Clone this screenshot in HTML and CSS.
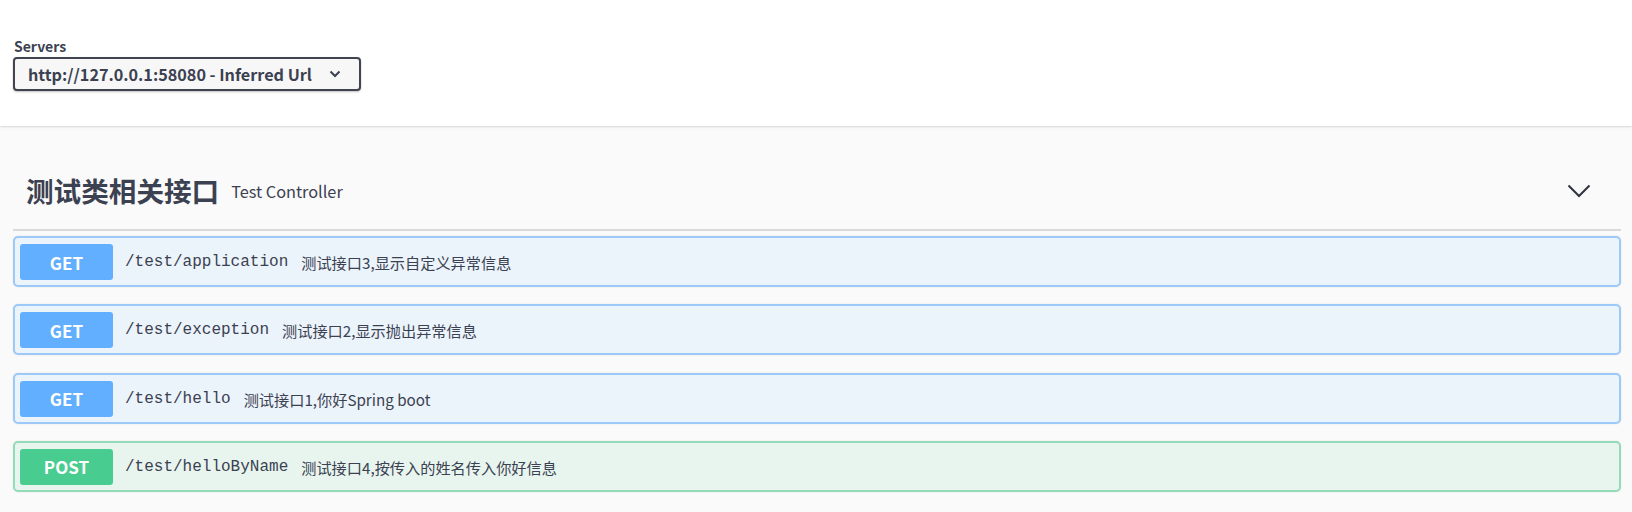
FILE: index.html
```html
<!DOCTYPE html>
<html lang="zh-CN">
<head>
<meta charset="utf-8">
<title>Swagger UI</title>
<link rel="stylesheet" href="styles.css">
</head>
<body>
<div class="scheme">
  <div class="servers">
    <label class="servers-label">Servers</label>
    <div class="select">
      <span class="select-text">http://127.0.0.1:58080 - Inferred Url</span>
      <svg class="select-arrow" width="12" height="8" viewBox="0 0 12 8"><path d="M1.5 1.5 L6 6 L10.5 1.5" fill="none" stroke="#3b4151" stroke-width="2"/></svg>
    </div>
  </div>
</div>
<div class="main">
  <div class="wrapper">
    <div class="tag">
      <h3 class="tag-title">测试类相关接口</h3>
      <span class="tag-desc">Test Controller</span>
      <svg class="tag-arrow" width="24" height="14" viewBox="0 0 24 14"><path d="M1.5 1.5 L12 12 L22.5 1.5" fill="none" stroke="#2f3340" stroke-width="2"/></svg>
    </div>
    <div class="opblock get">
      <span class="method">GET</span>
      <span class="path">/test/application</span>
      <span class="desc">测试接口3,显示自定义异常信息</span>
    </div>
    <div class="opblock get">
      <span class="method">GET</span>
      <span class="path">/test/exception</span>
      <span class="desc">测试接口2,显示抛出异常信息</span>
    </div>
    <div class="opblock get">
      <span class="method">GET</span>
      <span class="path">/test/hello</span>
      <span class="desc">测试接口1,你好Spring boot</span>
    </div>
    <div class="opblock post">
      <span class="method">POST</span>
      <span class="path">/test/helloByName</span>
      <span class="desc">测试接口4,按传入的姓名传入你好信息</span>
    </div>
  </div>
</div>
</body>
</html>
```

FILE: styles.css
```css
html, body {
  margin: 0;
  padding: 0;
  background: #fafafa;
  font-family: "Noto Sans CJK SC", sans-serif;
  color: #3b4151;
}

.scheme {
  height: 126px;
  background: #ffffff;
  box-shadow: 0 1px 2px 0 rgba(0, 0, 0, 0.15);
  box-sizing: border-box;
  padding: 37px 0 0 13px;
  position: relative;
}

.servers {
  display: flex;
  flex-direction: column;
  align-items: flex-start;
}

.servers-label {
  font-size: 14px;
  font-weight: 700;
  line-height: 19px;
  margin-left: 1px;
  margin-bottom: 1px;
}

.select {
  box-sizing: border-box;
  width: 348px;
  height: 34px;
  border: 2px solid #41444e;
  border-radius: 4px;
  background: #f7f7f7;
  box-shadow: 0 1px 2px 0 rgba(0, 0, 0, 0.25);
  display: flex;
  align-items: center;
  padding: 0 0 0 13px;
}

.select-text {
  font-size: 16.2px;
  font-weight: 700;
  line-height: 1;
  white-space: nowrap;
}

.select-arrow {
  margin-left: 17px;
}

.main {
  padding: 27px 11px 0 13px;
}

.tag {
  height: 76px;
  border-bottom: 2px solid #dadada;
  display: flex;
  align-items: center;
  padding: 0 0 0 13px;
  margin-bottom: 5px;
}

.tag-title {
  margin: 0;
  font-size: 27.6px;
  font-weight: 700;
  line-height: 1;
  color: #3b4151;
}

.tag-desc {
  margin-left: 12px;
  font-size: 16.3px;
  line-height: 1;
  color: #3b4151;
}

.tag-arrow {
  margin-left: auto;
  margin-right: 30px;
}

.opblock {
  box-sizing: border-box;
  height: 51px;
  border: 2px solid;
  border-radius: 5px;
  display: flex;
  align-items: center;
  padding: 1px 5px 0 5px;
  margin-bottom: 17.3px;
  box-shadow: 0 0 2px rgba(0, 0, 0, 0.1);
}

.opblock.get {
  background: #ebf3fb;
  border-color: #9cc9f8;
}

.opblock.post {
  background: #e8f5ef;
  border-color: #93dbb9;
}

.method {
  width: 93px;
  height: 36px;
  border-radius: 3px;
  color: #ffffff;
  font-size: 17px;
  font-weight: 700;
  display: flex;
  align-items: center;
  justify-content: center;
}

.get .method {
  background: #61affe;
}

.post .method {
  background: #49cc90;
}

.path {
  margin-left: 12px;
  font-family: "Liberation Mono", monospace;
  font-size: 16px;
  color: #3b4151;
}

.desc {
  margin-left: 13px;
  font-size: 15.2px;
  color: #3b4151;
}
```
